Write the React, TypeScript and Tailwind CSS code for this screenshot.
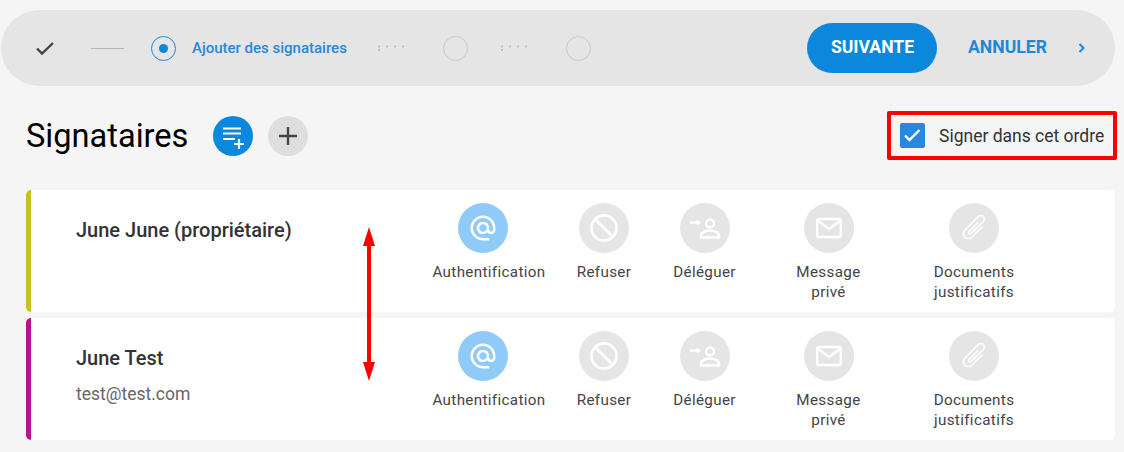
import React from "react";

const Dots = () => (
  <svg width="28" height="8" viewBox="0 0 28 8" className="block">
    <g fill="#bdbdbd">
      <rect x="0" y="1.5" width="2" height="2" />
      <rect x="0" y="5" width="2" height="2" />
      <rect x="8" y="1.5" width="2" height="2" />
      <rect x="16" y="1.5" width="2" height="2" />
      <rect x="24" y="1.5" width="2" height="2" />
    </g>
  </svg>
);

const IconAt = () => (
  <svg width="30" height="30" viewBox="0 0 24 24" fill="#fff">
    <path d="M12 1.95c-5.52 0-10 4.48-10 10s4.48 10 10 10h5v-2h-5c-4.34 0-8-3.66-8-8s3.66-8 8-8 8 3.66 8 8v1.43c0 .79-.71 1.57-1.5 1.57s-1.5-.78-1.5-1.57v-1.43c0-2.76-2.24-5-5-5s-5 2.24-5 5 2.24 5 5 5c1.38 0 2.64-.56 3.54-1.47.65.89 1.77 1.47 2.96 1.47 1.97 0 3.5-1.6 3.5-3.57v-1.43c0-5.52-4.48-10-10-10zm0 13c-1.66 0-3-1.34-3-3s1.34-3 3-3 3 1.34 3 3-1.34 3-3 3z" />
  </svg>
);

const IconBan = () => (
  <svg width="50" height="50" viewBox="0 0 50 50" fill="none" stroke="#fff" strokeWidth="2.6">
    <circle cx="25" cy="25" r="12.6" />
    <path d="M16 16l18 18" />
  </svg>
);

const IconDelegate = () => (
  <svg width="50" height="50" viewBox="0 0 50 50" fill="none" stroke="#fff" strokeWidth="2.4">
    <circle cx="30" cy="20.5" r="4" />
    <path d="M21 34.5v-2c0-3 5-5 9-5s9 2 9 5v2z" />
    <path d="M10 19.5h8" />
    <path d="M17 17l3.5 2.5-3.5 2.5z" fill="#fff" strokeWidth="1" />
  </svg>
);

const IconMail = () => (
  <svg width="50" height="50" viewBox="0 0 50 50" fill="none" stroke="#fff" strokeWidth="2.4">
    <rect x="13.2" y="16" width="23.6" height="18" rx="1.5" />
    <path d="M14 18l11 8 11-8" />
  </svg>
);

const IconClip = () => (
  <svg width="50" height="50" viewBox="0 0 50 50" fill="none" stroke="#fff" strokeWidth="1.6" className="rotate-45">
    <path d="M30 18v15a5 5 0 0 1-10 0V14a3.5 3.5 0 0 1 7 0v17a1.5 1.5 0 0 1-3 0V18" />
  </svg>
);

const Action = ({ w, label, active, shift, children }: { w: string; label: React.ReactNode; active?: boolean; shift?: boolean; children: React.ReactNode }) => (
  <div className={`flex flex-col items-center ${w}`}>
    <div
      className={`flex h-[50px] w-[50px] items-center justify-center rounded-full ${active ? "bg-[#90caf9]" : "bg-[#e5e5e5]"} ${shift ? "mr-[12px]" : ""}`}
    >
      {children}
    </div>
    <div className="mt-[9px] whitespace-nowrap text-center text-[15.2px] leading-5 tracking-[0.35px] text-[#444]">{label}</div>
  </div>
);

const Card = ({ color, name, email }: { color: string; name: string; email?: string }) => (
  <div className={`flex h-[122px] rounded-[5px] border-l-[5px] bg-white pt-[13px] ${color}`}>
    <div className="w-[401px] pl-[45px]">
      <div className="mt-[15px] text-[20px] font-medium leading-[24px] text-[#333]">{name}</div>
      {email && <div className="mt-[12px] text-[17.5px] leading-[24px] text-[#666]">{email}</div>}
    </div>
    <Action w="w-[114px]" label="Authentification" active shift>
      <IconAt />
    </Action>
    <Action w="w-[116px]" label="Refuser">
      <IconBan />
    </Action>
    <Action w="w-[85px]" label="Déléguer">
      <IconDelegate />
    </Action>
    <Action w="w-[163px]" label={<>Message<br />privé</>}>
      <IconMail />
    </Action>
    <Action w="w-[128px]" label={<>Documents<br />justificatifs</>}>
      <IconClip />
    </Action>
  </div>
);

export default function App() {
  return (
    <div className="relative h-[452px] w-[1124px] overflow-hidden bg-[#f5f5f5] font-['Roboto',sans-serif]">
      <div className="pl-px pr-[9px] pt-[10px]">
        <div className="flex h-[76px] items-center rounded-[38px] bg-[#e5e5e5]">
          <svg width="22" height="22" viewBox="0 0 22 22" fill="none" stroke="#444" strokeWidth="2.4" className="ml-[33px]">
            <path d="M3 11.5l5 5L19 6" />
          </svg>
          <div className="ml-[35px] h-px w-[33px] bg-[#b5b5b5]" />
          <div className="ml-[27px] flex h-[25px] w-[25px] items-center justify-center rounded-full border-[1.5px] border-[#1e88d8]">
            <div className="h-[9px] w-[9px] rounded-full bg-[#0b87dc]" />
          </div>
          <div className="ml-[16px] w-[155px] whitespace-nowrap text-[15px] font-medium text-[#2a87d8]">Ajouter des signataires</div>
          <div className="ml-[31px]"><Dots /></div>
          <div className="ml-[37px] h-[25px] w-[25px] rounded-full border-[1.5px] border-[#c8c8c8]" />
          <div className="ml-[33px]"><Dots /></div>
          <div className="ml-[37px] h-[25px] w-[25px] rounded-full border-[1.5px] border-[#c8c8c8]" />
          <button className="ml-[216px] h-[50px] w-[130px] rounded-[25px] bg-[#0b87dc] pb-[2px] pl-px text-[17.6px] font-bold text-white">SUIVANTE</button>
          <div className="ml-[31px] pb-[2px] text-[17.6px] font-bold text-[#1e88d8]">ANNULER</div>
          <svg width="10" height="12" viewBox="0 0 10 12" fill="none" stroke="#1e88d8" strokeWidth="2" className="ml-[30px]">
            <path d="M2.5 2l4 4-4 4" />
          </svg>
        </div>
      </div>

      <div className="flex h-[74px] items-center pl-[26px] pr-[7px] pt-[25px]">
        <h1 className="h-[49px] w-[162px] whitespace-nowrap pt-px text-[32.6px] leading-[49px] text-black">Signataires</h1>
        <div className="ml-[25px] flex h-10 w-10 items-center justify-center rounded-full bg-[#0b87dc]">
          <svg width="40" height="40" viewBox="0 0 40 40" fill="none" stroke="#fff" strokeWidth="2.2">
            <path d="M10 12.5h18M10 17.5h18M10 23h12M21 28h10M26 23v10" />
          </svg>
        </div>
        <div className="ml-[15px] flex h-10 w-10 items-center justify-center rounded-full bg-[#dedede]">
          <svg width="40" height="40" viewBox="0 0 40 40" fill="none" stroke="#444" strokeWidth="2.4">
            <path d="M11 20h18M20 11v18" />
          </svg>
        </div>
        <div className="ml-auto flex h-[49px] w-[230px] items-center rounded-[2px] border-[4px] border-[#f00] pl-[9px]">
          <div className="flex h-[25px] w-[25px] items-center justify-center rounded-[2px] bg-[#2a87e0]">
            <svg width="19" height="19" viewBox="0 0 19 19" fill="none" stroke="#fff" strokeWidth="2.4">
              <path d="M2 9.5l4.5 4.5 10-10" />
            </svg>
          </div>
          <span className="ml-[14px] whitespace-nowrap pt-px text-[17.5px] text-[#333]">Signer dans cet ordre</span>
        </div>
      </div>

      <div className="flex flex-col gap-[6px] pl-[26px] pr-[9px] pt-[30px]">
        <Card color="border-[#c8c31c]" name="June June (propriétaire)" />
        <Card color="border-[#b8128e]" name="June Test" email="test@test.com" />
      </div>

      <svg width="14" height="156" viewBox="0 0 14 156" className="absolute left-[362px] top-[226px]">
        <path d="M7 1l6 19H9v116h4l-6 19-6-19h4V20H1z" fill="#f00" />
      </svg>
    </div>
  );
}
